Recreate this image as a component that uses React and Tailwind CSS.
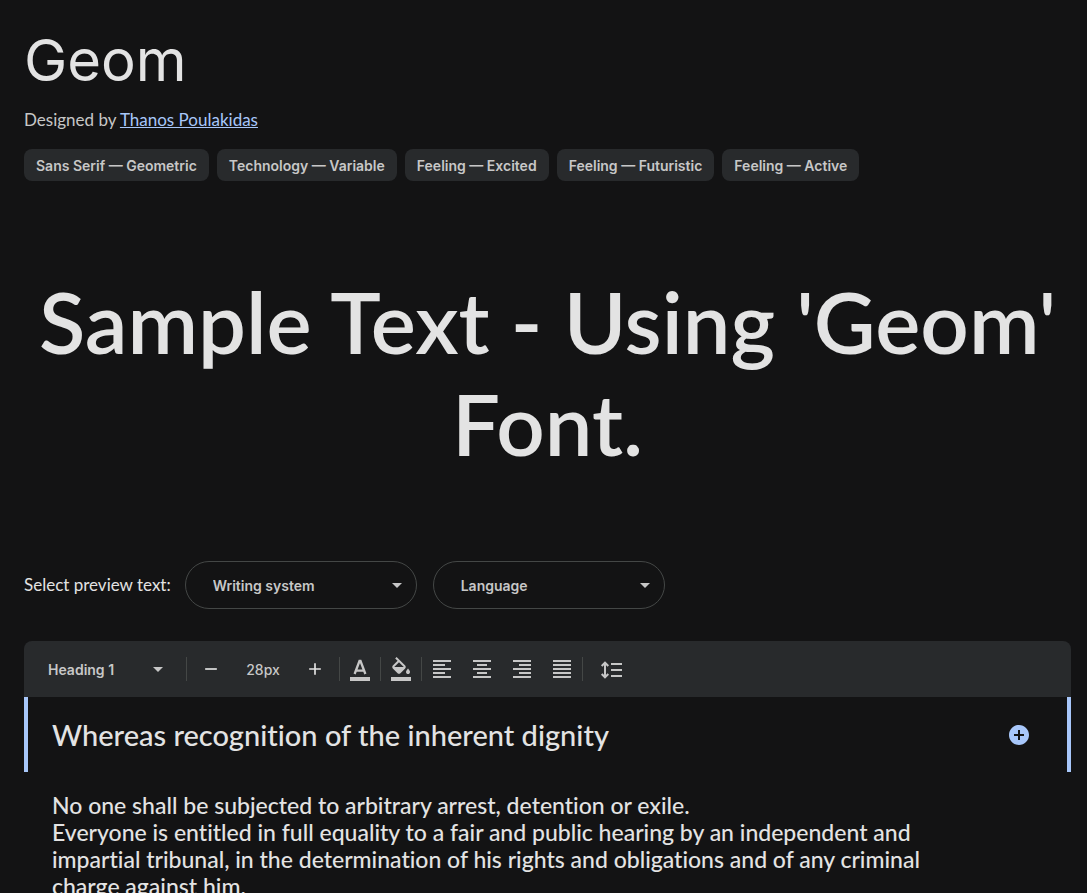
import React, { useState } from "react";
import {
  MdAdd,
  MdAddCircle,
  MdArrowDropDown,
  MdFormatAlignCenter,
  MdFormatAlignJustify,
  MdFormatAlignLeft,
  MdFormatAlignRight,
  MdRemove,
} from "react-icons/md";

const TAGS = [
  "Sans Serif — Geometric",
  "Technology — Variable",
  "Feeling — Excited",
  "Feeling — Futuristic",
  "Feeling — Active",
];

const ALIGNMENTS = [
  { name: "left", Icon: MdFormatAlignLeft },
  { name: "center", Icon: MdFormatAlignCenter },
  { name: "right", Icon: MdFormatAlignRight },
  { name: "justify", Icon: MdFormatAlignJustify },
];

// Letter with a color bar under it
function TextColorIcon() {
  return (
    <svg width="24" height="24" viewBox="0 -960 960 960" fill="currentColor">
      <path d="M80 0v-160h800V0H80Z" />
      <path
        d="M264-280 460-800h40l196 520M330-416h300"
        fill="none"
        stroke="currentColor"
        strokeWidth="92"
      />
    </svg>
  );
}

// Paint bucket with a color bar under it
function FillColorIcon() {
  return (
    <svg width="24" height="24" viewBox="0 -960 960 960" fill="currentColor">
      <path d="m247-904 57-56 343 343q23 23 23 57t-23 57L457-313q-23 23-57 23t-57-23L153-503q-23-23-23-57t23-57l190-191-96-96Zm153 153L209-560h382L400-751Zm360 471q-33 0-56.5-23.5T680-360q0-21 12.5-45t27.5-45q9-12 19-25t21-25q11 12 21 25t19 25q15 21 27.5 45t12.5 45q0 33-23.5 56.5T760-280ZM80 0v-160h800V0H80Z" />
    </svg>
  );
}

// Double-headed arrow beside three lines
function LineHeightIcon() {
  return (
    <svg width="24" height="24" viewBox="0 0 24 24" fill="none" stroke="currentColor" strokeWidth="2">
      <path d="M6 6v14M2.7 9 6 5.7 9.3 9M2.7 17 6 20.3 9.3 17M12 7h11M12 13h11M12 19h11" />
    </svg>
  );
}

// Outlined pill drop-down
function PillSelect({ label }) {
  return (
    <div className="relative w-58">
      <select
        aria-label={label}
        className="h-12 w-full appearance-none rounded-full border border-[#444746] bg-transparent px-[27px] text-[14px] font-semibold text-[#c7c7c7]"
      >
        <option>{label}</option>
      </select>
      <MdArrowDropDown size={24} className="pointer-events-none absolute right-2 top-3 text-[#c7c7c7]" />
    </div>
  );
}

function ToolButton({ label, className = "w-10", children }) {
  return (
    <button type="button" aria-label={label} className={`flex h-10 items-center justify-center ${className}`}>
      {children}
    </button>
  );
}

function Divider() {
  return <span className="h-6 w-px bg-[#444746]" />;
}

function Toolbar() {
  const [size, setSize] = useState(28);

  return (
    <div className="flex h-14 items-center rounded-t-lg bg-[#282a2c] text-[#c7c7c7]">
      <div className="relative w-[162px]">
        <select
          aria-label="Text style"
          className="h-10 w-full appearance-none bg-transparent pl-6 text-[14px] font-semibold"
        >
          <option>Heading 1</option>
          <option>Heading 2</option>
          <option>Paragraph</option>
        </select>
        <MdArrowDropDown size={24} className="pointer-events-none absolute right-4 top-2" />
      </div>
      <Divider />
      <button
        type="button"
        aria-label="Decrease size"
        onClick={() => setSize(size - 1)}
        className="flex h-10 w-12 items-center justify-center text-[#e3e3e3]"
      >
        <MdRemove size={20} />
      </button>
      <input
        aria-label="Font size"
        value={`${size}px`}
        onChange={(e) => setSize(parseInt(e.target.value, 10) || 0)}
        className="h-10 w-14 bg-transparent text-center text-[14px] font-medium"
      />
      <button
        type="button"
        aria-label="Increase size"
        onClick={() => setSize(size + 1)}
        className="flex h-10 w-12 items-center justify-center text-[#e3e3e3]"
      >
        <MdAdd size={20} />
      </button>
      <Divider />
      <ToolButton label="Text color">
        <TextColorIcon />
      </ToolButton>
      <Divider />
      <ToolButton label="Background color">
        <FillColorIcon />
      </ToolButton>
      <Divider />
      {ALIGNMENTS.map(({ name, Icon }) => (
        <ToolButton key={name} label={`Align ${name}`}>
          <Icon size={24} />
        </ToolButton>
      ))}
      <Divider />
      <ToolButton label="Line height" className="w-14">
        <LineHeightIcon />
      </ToolButton>
    </div>
  );
}

export default function App() {
  return (
    <main className="min-h-screen bg-[#131314] pl-6 pr-4 pt-6 font-['Inter',sans-serif] text-[#e3e3e3]">
      <h1 className="text-[58px] leading-[72px]">Geom</h1>
      <p className="mt-3 font-['Lato',sans-serif] text-[17px] leading-6 text-[#c7c7c7]">
        Designed by{" "}
        <a href="#designer" className="text-[#a8c7fa] underline">
          Thanos Poulakidas
        </a>
      </p>

      <ul className="mt-[17px] flex flex-wrap gap-2">
        {TAGS.map((tag) => (
          <li key={tag}>
            <button
              type="button"
              className="flex h-8 items-center rounded-lg bg-[#282a2c] px-3 text-[14px] font-semibold text-[#c7c7c7]"
            >
              {tag}
            </button>
          </li>
        ))}
      </ul>

      <p className="mt-[89px] text-center font-['Lato',sans-serif] text-[85px] font-semibold leading-[102px] [font-variant-ligatures:none]">
        Sample Text - Using 'Geom' Font.
      </p>

      <div className="mt-[87px] flex items-center gap-3.5">
        <span className="font-['Lato',sans-serif] text-[17px]">Select preview text:</span>
        <div className="flex gap-4">
          <PillSelect label="Writing system" />
          <PillSelect label="Language" />
        </div>
      </div>

      <section className="mt-8">
        <Toolbar />
        <div className="flex h-[75px] items-center justify-between border-x-4 border-[#a8c7fa] pl-6 pr-9 font-['Lato',sans-serif] [font-variant-ligatures:none]">
          <h2 className="text-[29px] font-medium">Whereas recognition of the inherent dignity</h2>
          <button type="button" aria-label="Add text block" className="text-[#a8c7fa]">
            <MdAddCircle size={24} />
          </button>
        </div>
        <p className="pl-7 pr-28 pt-5 font-['Lato',sans-serif] text-[23px] font-medium leading-[27px] [font-variant-ligatures:none]">
          No one shall be subjected to arbitrary arrest, detention or exile.
          <br />
          Everyone is entitled in full equality to a fair and public hearing by an independent and
          impartial tribunal, in the determination of his rights and obligations and of any criminal
          charge against him.
        </p>
      </section>
    </main>
  );
}
